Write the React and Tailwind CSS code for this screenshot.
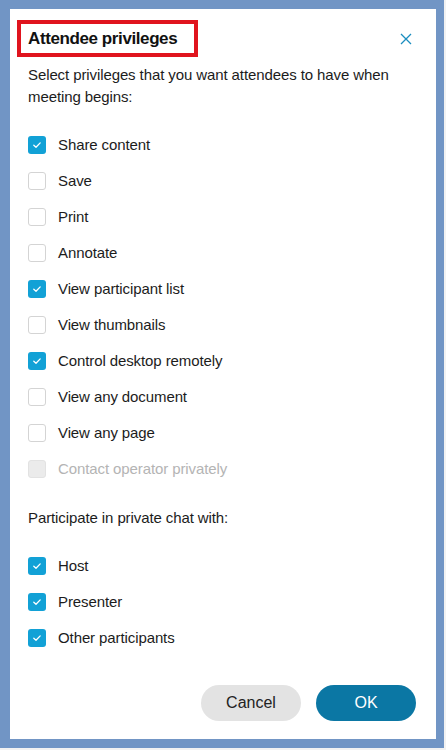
import React from "react";

const privileges = [
  { label: "Share content", checked: true },
  { label: "Save", checked: false },
  { label: "Print", checked: false },
  { label: "Annotate", checked: false },
  { label: "View participant list", checked: true },
  { label: "View thumbnails", checked: false },
  { label: "Control desktop remotely", checked: true },
  { label: "View any document", checked: false },
  { label: "View any page", checked: false },
  { label: "Contact operator privately", checked: false, disabled: true },
];

const chatWith = [
  { label: "Host", checked: true },
  { label: "Presenter", checked: true },
  { label: "Other participants", checked: true },
];

const CheckRow = ({ label, checked, disabled }) => (
  <div className="flex items-center h-9">
    {disabled ? (
      <span className="w-[18px] h-[18px] rounded-[3px] bg-[#ebebeb] border border-[#e2e2e2]"></span>
    ) : checked ? (
      <span className="w-[18px] h-[18px] rounded-[3px] bg-[#12a1d6] flex items-center justify-center">
        <svg width="12" height="12" viewBox="0 0 12 12">
          <polyline
            points="2.8,6.2 5,8.3 9.2,3.9"
            fill="none"
            stroke="white"
            strokeWidth="1.3"
            strokeLinecap="round"
            strokeLinejoin="round"
          />
        </svg>
      </span>
    ) : (
      <span className="w-[18px] h-[18px] rounded-[3px] bg-white border border-[#d4d4d4]"></span>
    )}
    <span
      className={
        "ml-3 text-[15px] tracking-[-0.1px] " + (disabled ? "text-[#b4b4b4]" : "text-[#1c1c1c]")
      }
    >
      {label}
    </span>
  </div>
);

export default function App() {
  return (
    <div
      className="w-[446px] h-[750px] bg-[#f2f2f2] text-[#1c1c1c]"
      style={{ fontFamily: '"Liberation Sans", Arial, sans-serif' }}
    >
      <div className="w-[444px] h-[748px] bg-[#7195c5] pl-[10px] pt-[9px] pr-[8px] pb-[9px]">
        <div className="w-[426px] h-[730px] bg-white pl-[18px] pr-[20px] pt-[11px]">
          {/* Header */}
          <div className="flex items-center justify-between">
            <div className="-ml-[11px] shrink-0 w-[181px] h-[37px] border-4 border-[#e0141e] flex items-center pl-[7px]">
              <h2 className="text-[17px] font-bold tracking-[-0.4px] text-[#111] whitespace-nowrap">
                Attendee privileges
              </h2>
            </div>
            <button className="mr-[4px] w-[12px] h-[12px] flex items-center justify-center">
              <svg width="12" height="12" viewBox="0 0 12 12">
                <path d="M1 1 L11 11 M11 1 L1 11" stroke="#1b8dbf" strokeWidth="1.3" fill="none" />
              </svg>
            </button>
          </div>

          <p className="mt-[7px] text-[15px] leading-[22px] tracking-[-0.1px]">
            Select privileges that you want attendees to have when meeting begins:
          </p>

          <div className="mt-[19px]">
            {privileges.map((p) => (
              <CheckRow key={p.label} {...p} />
            ))}
          </div>

          <p className="mt-[20px] text-[15px] leading-[22px] tracking-[-0.1px]">
            Participate in private chat with:
          </p>

          <div className="mt-[19px]">
            {chatWith.map((p) => (
              <CheckRow key={p.label} {...p} />
            ))}
          </div>

          <div className="mt-[29px] flex justify-end gap-[15px]">
            <button className="w-[100px] h-[36px] rounded-full bg-[#e3e3e3] text-[16px] text-[#222]">
              Cancel
            </button>
            <button className="w-[100px] h-[36px] rounded-full bg-[#0b77a4] text-[16px] text-white">
              OK
            </button>
          </div>
        </div>
      </div>
    </div>
  );
}
